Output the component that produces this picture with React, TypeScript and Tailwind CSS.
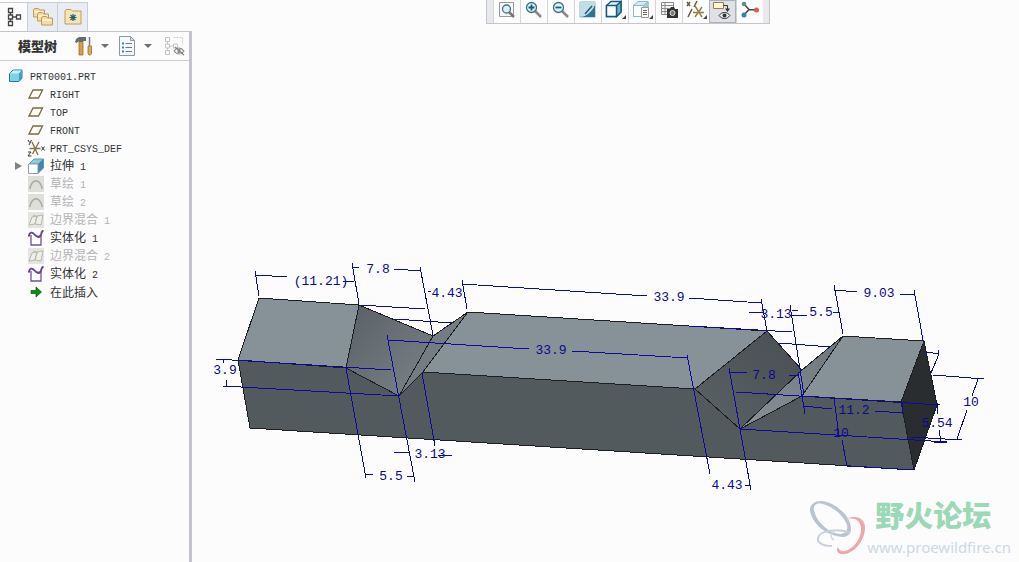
import React from "react";

type IconName =
  | "part"
  | "plane"
  | "csys"
  | "extrude"
  | "sketch"
  | "blend"
  | "solidify"
  | "insert";

interface TreeItem {
  label: string;
  icon: IconName;
  muted?: boolean;
  expandable?: boolean;
}

const treeItems: TreeItem[] = [
  { label: "RIGHT", icon: "plane" },
  { label: "TOP", icon: "plane" },
  { label: "FRONT", icon: "plane" },
  { label: "PRT_CSYS_DEF", icon: "csys" },
  { label: "拉伸 1", icon: "extrude", expandable: true },
  { label: "草绘 1", icon: "sketch", muted: true },
  { label: "草绘 2", icon: "sketch", muted: true },
  { label: "边界混合 1", icon: "blend", muted: true },
  { label: "实体化 1", icon: "solidify" },
  { label: "边界混合 2", icon: "blend", muted: true },
  { label: "实体化 2", icon: "solidify" },
  { label: "在此插入", icon: "insert" },
];

const TreeIcon = ({ name }: { name: IconName }) => {
  switch (name) {
    case "part":
      return (
        <svg className="w-4 h-4 shrink-0" viewBox="0 0 16 16">
          <path d="M1.5 5.5 5 2h9v8l-3 3.5H1.5z" fill="#7cd0ea" stroke="#2a7c9c" />
          <path d="M2 5.5 5.2 2.5h8.3L11 5.5z" fill="#c6effa" />
          <path d="M11 5.5 13.5 2.5V10L11 13z" fill="#3d9fc4" />
        </svg>
      );
    case "plane":
      return (
        <svg className="w-4 h-4 shrink-0" viewBox="0 0 16 16">
          <path d="M5 4h9.500L10.500 12H1z" fill="#fdfcf6" stroke="#7b6a48" strokeWidth="1.300" />
        </svg>
      );
    case "csys":
      return (
        <svg className="w-4 h-4 shrink-0 overflow-visible" viewBox="0 0 16 16">
          <path d="M1.500 8.500h11M4 2l6 13M11 2 4.500 14" stroke="#8a7444" strokeWidth="1.400" fill="none" />
          <path d="M13.500 6.500l3 4m0-4-3 4M0 0l1.500 2.500M3.500 0 1 5M0 12h3L0 16h3.500" stroke="#333" fill="none" />
        </svg>
      );
    case "extrude":
      return (
        <svg className="w-4 h-4 shrink-0" viewBox="0 0 16 16">
          <path d="M1 6 6 1h9.500v9L10 15.500V6z" fill="#8fc9e2" stroke="#5b9dba" />
          <path d="M10 6 15 1v9l-5 5z" fill="#3f86a8" />
          <path d="M.5 6h9.500v9.500H.5z" fill="#fff" stroke="#8aa0aa" />
        </svg>
      );
    case "sketch":
      return (
        <svg className="w-4 h-4 shrink-0" viewBox="0 0 16 16">
          <path d="M0 0h16v16H0z" fill="#dededb" />
          <path d="M2 11.500C5 2.500 11 2.500 14 11.500" stroke="#aaa99b" strokeWidth="1.500" fill="none" />
          <path d="M1 11h2v2H1zM13 11h2v2h-2z" fill="#b9b8ae" />
        </svg>
      );
    case "blend":
      return (
        <svg className="w-4 h-4 shrink-0" viewBox="0 0 16 16">
          <path d="M0 0h16v16H0z" fill="#e4e4e1" />
          <path d="M1 13 4 5l5-1-2 8zM7 12 9 4l6-1-2 10zM5 3l5 2" stroke="#b8b8ac" fill="#eeeeea" />
        </svg>
      );
    case "solidify":
      return (
        <svg className="w-4 h-4 shrink-0" viewBox="0 0 16 16">
          <path d="M3 5v10h10V5" fill="#fff" stroke="#71538f" strokeWidth="1.300" />
          <path d="M5 3c3 0 3 4 6 3.500 2-.5 2-3 3-4.500L13 5H9z" fill="#cdbfe0" />
          <path d="M.8 6.500C1.500 2 4 1.500 6.500 4.500S12 8 13 4.500c.5-2 1-3.500 2.500-4" fill="none" stroke="#67428f" strokeWidth="1.900" />
        </svg>
      );
    case "insert":
      return (
        <svg className="w-4 h-4 shrink-0" viewBox="0 0 16 16">
          <path d="M3 6.500h5V3l5.500 5L8 13V9.500H3z" fill="#128a12" stroke="#075c07" strokeWidth=".7" />
        </svg>
      );
  }
};

// latin is set smaller than the hanzi, so one letter is half as wide as one hanzi
const Label = ({ text, muted }: { text: string; muted?: boolean }) => (
  <span
    className={
      muted
        ? "pl-1.5 text-[12px] leading-4 whitespace-pre text-[#b4b4b4] font-['Noto_Sans_CJK_SC',sans-serif]"
        : "pl-1.5 text-[12px] leading-4 whitespace-pre text-[#333] font-['Noto_Sans_CJK_SC',sans-serif]"
    }
  >
    {text.split(/([\x20-\x7e]+)/).map((part, i) =>
      i % 2 ? (
        <span key={i} className="text-[10px] font-['Liberation_Mono',monospace]">
          {part}
        </span>
      ) : (
        part
      )
    )}
  </span>
);

const Row = ({ item }: { item: TreeItem }) => (
  <li className="flex items-center h-[18px] pl-3">
    <span className="w-4 shrink-0">
      {item.expandable && (
        <button aria-label={"展开 " + item.label} className="flex">
          <svg className="w-3 h-3" viewBox="0 0 12 12">
            <path d="M3 2v8l7-4z" fill="#7c8584" />
          </svg>
        </button>
      )}
    </span>
    <TreeIcon name={item.icon} />
    <Label text={item.label} muted={item.muted} />
  </li>
);

const Folder = ({ x, y }: { x: number; y: number }) => (
  <g transform={`translate(${x} ${y})`}>
    <path d="M.5 9V2l1-1.500h4L7 2h4.500v7z" fill="#f3dca4" stroke="#c39a55" />
    <path d="M1.500 4h9" stroke="#fff6dc" strokeWidth="1.500" />
  </g>
);

const Caret = () => (
  <svg className="w-2 h-2" viewBox="0 0 8 8">
    <path d="M0 2h8L4 6z" fill="#6f6f6f" />
  </svg>
);

const SidePanel = () => (
  <aside className="flex flex-col shrink-0 w-48 pt-[2px]">
    <div className="flex h-[29px] shrink-0">
      <button aria-label="模型树" className="w-7 flex items-center justify-center border-t border-r border-[#c9ced6]">
        <svg className="w-4 h-5" viewBox="0 0 16 20" fill="none" stroke="#444" strokeWidth="1.300">
          <path d="M2.500 1.500h4v4h-4zM2.500 8h4v4h-4zM2.500 14.500h4v4h-4zM10.500 8h4v4h-4zM4.500 5.500V8M4.500 12v2.500M6.500 10h4" />
        </svg>
      </button>
      <button aria-label="文件夹浏览器" className="w-[30px] flex items-center justify-center bg-[#e9edf3] border-t border-r border-[#c9ced6]">
        <svg className="w-5 h-5" viewBox="0 0 20 20">
          <Folder x={0} y={1} />
          <Folder x={4} y={5} />
          <Folder x={8} y={9} />
        </svg>
      </button>
      <button aria-label="收藏夹" className="w-[30px] flex items-center justify-center bg-[#e9edf3] border-t border-r border-[#c9ced6]">
        <svg className="w-[18px] h-[18px]" viewBox="0 0 18 18">
          <path d="M1 16V3l1-1.500h5L8.500 3H17v13z" fill="#f6e4b7" stroke="#c39a55" />
          <path d="M9 6v7M5.500 9.500h7M6.500 7l5 5M11.500 7l-5 5" stroke="#17627c" strokeWidth="1.200" />
        </svg>
      </button>
    </div>
    <div className="flex flex-col grow border-t border-r-[3px] border-t-[#c3c7cd] border-r-[#c3c4cb]">
      <div className="flex items-center h-[29px] shrink-0 border-b border-[#c9cdd3] pl-[18px] pr-1">
        <h1 className="w-[58px] text-[13px] font-black text-[#333] font-['Noto_Sans_CJK_SC',sans-serif] leading-4">模型树</h1>
        <button aria-label="设置" className="flex items-center gap-2">
          <svg className="w-[18px] h-5" viewBox="0 0 18 20">
            <path d="M4 5h4v14H4z" fill="#d99e4b" stroke="#9c6a2a" strokeWidth=".8" />
            <path d="M0 6c1-4 3-5 6-5h5v4H8v1H4V5L1.500 7z" fill="#656b70" />
            <path d="M14.500 1v9" stroke="#777d82" strokeWidth="1.500" />
            <path d="M13 10h3.500v7.500l-1 1.500H14l-1-1.500z" fill="#e2a850" stroke="#a06f2c" strokeWidth=".8" />
          </svg>
          <Caret />
        </button>
        <button aria-label="显示" className="flex items-center gap-2 ml-[9px]">
          <svg className="w-[18px] h-5" viewBox="0 0 18 20">
            <path d="M1.500.5h11l4 4v15h-15z" fill="#f4f8fa" stroke="#8c989e" />
            <path d="M12.500.5v4h4z" fill="#cfdbe0" stroke="#8c989e" />
            <path d="M4 7.500h2M4 11.500h2M4 15.500h2" stroke="#3f84a3" strokeWidth="2" />
            <path d="M7.500 7.500H14M7.500 11.500H14M7.500 15.500H14" stroke="#707a80" />
          </svg>
          <Caret />
        </button>
        <button aria-label="隐藏项" className="ml-3">
          <svg className="w-[21px] h-5 block" viewBox="0 0 21 20" fill="none">
            <path d="M1.500 1.500h4v4h-4zM1.500 8h4v4h-4zM1.500 14.500h4v4h-4zM9.500 8h4v4h-4zM3.500 5.500V8M3.500 12v2.500M5.500 10h4" stroke="#c5c5c5" />
            <path d="M9.500 1.500h9v7" stroke="#ccc" strokeDasharray="2 1" />
            <path d="M10 15c3-4 7-4 10 0-3 4-7 4-10 0zM11 11l9 8" stroke="#858585" strokeWidth="1.200" />
            <path d="M13.500 13h3v4h-3z" fill="#8c8c8c" />
          </svg>
        </button>
      </div>
      <ul className="pt-1.5">
        <li className="flex items-center h-[18px] pl-2">
          <TreeIcon name="part" />
          <Label text="PRT0001.PRT" />
        </li>
        {treeItems.map((item) => (
          <Row key={item.label} item={item} />
        ))}
      </ul>
    </div>
  </aside>
);

const Corner = () => <path d="M22 15v4h-4z" fill="#444" />;

const Cube = ({ light = false }: { light?: boolean }) => (
  <g stroke={light ? "#8fb8ca" : "#155a7b"} strokeWidth={light ? 1 : 1.4}>
    <path d="M2.500 5.500 7 1.500h10V12l-4.500 4.500h-10z" fill={light ? "#d5e9f1" : "#e9f6fb"} />
    <path d="M12.500 5.500 17 1.500V12l-4.500 4.500z" fill={light ? "#a8cfdf" : "#6fb3cf"} />
    <path d="M2.500 5.500h10v11h-10z" fill="#fbfdfe" />
  </g>
);

const tools: { label: string; drawing: React.ReactNode; active?: boolean }[] = [
  {
    label: "重新调整",
    drawing: (
      <>
        <path d="M3.500 2.500h14v14h-14z" fill="#f6f6f6" stroke="#9a9a9a" />
        <path d="m13 12 5 5" stroke="#777" strokeWidth="2.500" />
        <circle cx="10.500" cy="9" r="4" fill="#d8eef7" stroke="#4c6f82" strokeWidth="1.300" />
      </>
    ),
  },
  {
    label: "放大",
    drawing: (
      <>
        <path d="m12 11 6 6" stroke="#888" strokeWidth="2.500" />
        <circle cx="8.500" cy="7.500" r="5" fill="#e2f3fa" stroke="#36708d" strokeWidth="1.300" />
        <path d="M5.500 7.500h6M8.500 4.500v6" stroke="#165b80" strokeWidth="1.800" />
      </>
    ),
  },
  {
    label: "缩小",
    drawing: (
      <>
        <path d="m12 11 6 6" stroke="#888" strokeWidth="2.500" />
        <circle cx="8.500" cy="7.500" r="5" fill="#e2f3fa" stroke="#36708d" strokeWidth="1.300" />
        <path d="M5.500 7.500h6" stroke="#165b80" strokeWidth="1.800" />
      </>
    ),
  },
  {
    label: "重画",
    drawing: (
      <>
        <path d="M3 2h15v15H3z" fill="#d4e7ed" stroke="#8eb0bd" />
        <path d="M18 5v12H5c6-2 10-6 13-12z" fill="#2f7590" />
        <path d="M3 2h15v3c-1 1-1 1-2 3L7 16H3z" fill="#c3dde6" />
        <path d="m8 14 7-8" stroke="#1d5d77" strokeWidth="1.500" />
      </>
    ),
  },
  {
    label: "显示样式",
    drawing: (
      <>
        <Cube />
        <Corner />
      </>
    ),
  },
  {
    label: "已保存方向",
    drawing: (
      <>
        <Cube light />
        <path d="M10.500 7.500h7v10h-7z" fill="#fff" stroke="#999" />
        <path d="M12 10.500h4M12 12.500h4M12 14.500h4" stroke="#666" />
        <Corner />
      </>
    ),
  },
  {
    label: "视图管理器",
    drawing: (
      <>
        <path d="M3.500 2.500h12v12h-12zM3.500 5.500h12M3.500 8.500h12M3.500 11.500h12M7 2.500v12" fill="#f7f7f7" stroke="#8c8c8c" />
        <path d="M9 9h3l1-2h3l1 2h3v9H9z" fill="#333" />
        <circle cx="14.500" cy="13" r="2.500" fill="#777" stroke="#ddd" />
      </>
    ),
  },
  {
    label: "基准显示",
    drawing: (
      <>
        <path d="m2 2 3 4M5 2 2 6M12 1 9 7M7 9l-4 8" stroke="#6b5a31" strokeWidth="1.500" />
        <path d="m10 6 7 11M17 7l-7 10M8 12.500h11" stroke="#96803f" strokeWidth="1.400" />
        <Corner />
      </>
    ),
  },
  {
    label: "注释显示",
    active: true,
    drawing: (
      <>
        <path d="M2.500 1.500h10v6h-10z" fill="#fff8dc" stroke="#967f45" />
        <path d="M12.500 4.500h4v4" fill="none" stroke="#333" />
        <path d="M14 7.500h5L16.500 11z" fill="#333" />
        <path d="M8 14.500c3-4 8-4 11 0-3 4-8 4-11 0z" fill="#eee" stroke="#333" />
        <circle cx="13.500" cy="14.500" r="2" fill="#333" />
      </>
    ),
  },
  {
    label: "旋转中心",
    drawing: (
      <>
        <path d="M5 4 10 9.500 17 10M10 9.500 5 15" stroke="#444" strokeWidth="1.500" fill="none" />
        <circle cx="5" cy="4" r="2.300" fill="#4f9c68" />
        <circle cx="17.500" cy="10" r="2.500" fill="#cd5d59" />
        <circle cx="5" cy="15" r="2.500" fill="#397eac" />
      </>
    ),
  },
];

const Toolbar = () => (
  <div className="flex justify-center pl-11 shrink-0">
    <div className="flex h-6 border-x border-b border-[#c3c5ca] bg-[#e8e9ec] px-1.5">
      {tools.map((tool) => (
        <button
          key={tool.label}
          aria-label={tool.label}
          className={
            tool.active
              ? "w-[27px] flex justify-center bg-[#e0e1e7] border border-[#aeb0b8]"
              : "w-[27px] flex justify-center bg-[#fcfcfd] border-l border-[#d3d5d9]"
          }
        >
          <svg className="w-[22px] h-5 shrink-0" viewBox="0 0 22 20" fill="none">
            {tool.drawing}
          </svg>
        </button>
      ))}
    </div>
  </div>
);

// dimension, extension and hidden lines
const dimLines = [
  // left block, upper dimensions
  "M255 271 259 296M256 275 287 277M343 281H354M352 263 359 304M352 267H359M394 269 421 271M420 267 433 335M428 291H431",
  "M359 305 425 309M394 319 452 323M462 280 467 309M462 284 647 296M689 298 762 303",
  // left block, lower dimensions
  "M216 359 391 370M223 386 399 396M223 359V363M226 380V386",
  "M346 368 366 478M366 474H373M407 476H414M387 335 415 482M388 340 529 349M394 452H409M422 373 435 446M438 455H452",
  // middle and right notch
  "M572 351 688 358M687 355 710 474M740 429 751 490M745 485H751M690 326 792 332",
  "M761 299 767 331M749 312H764M790 305 804 395M792 310H798M790 315H807M779 343 831 347M834 285 843 334M835 290 857 292M833 312H839M900 294 915 295M914 290 923 340",
  "M729 368 740 429M730 372H747M789 375H799M798 372 805 414M736 392 940 405M803 406 832 409M875 411 903 413M902 403V414",
  "M834 398 839 436M842 440 847 466M740 429 947 442M847 466 914 470",
  // right end
  "M926 352 939 354 931 373M938 350V354M933 375 984 379M978 379 972 396M967 410 957 439M911 437 962 440M939 430 941 442M934 442H947M937 403V414",
];

const dimLabels: { x: number; y: number; text: string }[] = [
  { x: 321, y: 285, text: "(11.21)" },
  { x: 378, y: 273, text: "7.8" },
  { x: 447, y: 297, text: "4.43" },
  { x: 669, y: 301, text: "33.9" },
  { x: 551, y: 354, text: "33.9" },
  { x: 879, y: 297, text: "9.03" },
  { x: 776, y: 318, text: "3.13" },
  { x: 821, y: 316, text: "5.5" },
  { x: 764, y: 379, text: "7.8" },
  { x: 854, y: 414, text: "11.2" },
  { x: 841, y: 437, text: "10" },
  { x: 937, y: 427, text: "5.54" },
  { x: 971, y: 406, text: "10" },
  { x: 727, y: 489, text: "4.43" },
  { x: 391, y: 480, text: "5.5" },
  { x: 430, y: 458, text: "3.13" },
  { x: 225, y: 374, text: "3.9" },
];

const Model = () => (
  <svg className="w-full grow min-h-0" viewBox="192 24 827 538" role="img" aria-label="PRT0001">
    <defs>
      <linearGradient id="notchLeft" x1="0" y1="0" x2="1" y2="1">
        <stop offset="0" stopColor="#596065" />
        <stop offset="1" stopColor="#7b848a" />
      </linearGradient>
      <linearGradient id="notchRight" x1="0" y1="1" x2="1" y2="0">
        <stop offset="0" stopColor="#5b6366" />
        <stop offset="1" stopColor="#484e51" />
      </linearGradient>
      <linearGradient id="sliver" x1="0" y1="1" x2="1" y2="0">
        <stop offset="0" stopColor="#899298" />
        <stop offset="1" stopColor="#6c757a" />
      </linearGradient>
    </defs>
    <g stroke="#1b1f21" strokeWidth="1" strokeLinejoin="round" shapeRendering="crispEdges">
      <path d="M238 360 346 368 399 396 423 372 695 389 740 429 802 396 901 402 914 470 250 428z" fill="#535a5d" />
      <path d="M259 298 359 305 346 368 238 360z" fill="#869198" />
      <path d="M468 312 767 331 695 389 423 372z" fill="#869198" />
      <path d="M843 336 924 341 901 402 802 396z" fill="#869198" />
      <path d="M359 305 433 336 399 396 346 368z" fill="url(#notchLeft)" />
      <path d="M433 336 468 312 423 372 399 396z" fill="#747d82" />
      <path d="M767 331 802 370 740 429 695 389z" fill="url(#notchRight)" />
      <path d="M802 370 843 336 802 396 740 429z" fill="url(#sliver)" />
      <path d="M924 341 937 405 914 470 901 402z" fill="#292d30" />
    </g>
    <g stroke="#0a0aa0" strokeWidth="1" fill="none" shapeRendering="crispEdges">
      {dimLines.map((d) => (
        <path key={d} d={d} />
      ))}
    </g>
    <g fill="#0a0a8c" textAnchor="middle" className="text-[13px] font-['Liberation_Mono',monospace]">
      {dimLabels.map((label) => (
        <text key={label.x} x={label.x} y={label.y}>
          {label.text}
        </text>
      ))}
    </g>
  </svg>
);

const Watermark = () => (
  <div className="absolute right-2 bottom-1 flex items-end">
    <svg className="w-[58px] h-[58px]" viewBox="0 0 58 58" fill="none">
      <path
        fillRule="evenodd"
        d="M1 10C1 1 12-2 23 4c11 6 19 15 19 25 0 5-3 7-7 8C18 37 2 23 1 10zm4 0c2 11 14 23 26 24 6 0 8-4 7-9C35 16 25 8 17 5 10 2 4 3 5 10z"
        fill="#b9c4d0"
      />
      <path d="M38 19c9-5 19 0 18 10-1 14-14 27-24 25-4-1-5-4-3-7 1 3 3 5 7 4 8-2 15-11 16-20 1-9-5-14-14-12z" fill="#efa6aa" />
      <path d="M41 33c-10-5-31-3-32 5-1 5 5 8 14 8" stroke="#c9d0d8" strokeWidth="2" />
      <path d="M27 30c-5 2-7 7-2 10" stroke="#d3d9df" strokeWidth="1.500" />
    </svg>
    <div className="flex flex-col">
      <p className="pl-2 text-[29px] leading-[44px] font-black text-[#9bd8b5] font-['Noto_Sans_CJK_SC',sans-serif]">野火论坛</p>
      <a href="#" className="text-[15px] leading-[22px] text-[#ccd9e3] font-['Noto_Sans',sans-serif]">
        www.proewildfire.cn
      </a>
    </div>
  </div>
);

export default function App() {
  return (
    <div className="flex h-screen bg-[#fcfcfd] overflow-hidden">
      <SidePanel />
      <main className="relative flex flex-col grow min-w-0">
        <Toolbar />
        <Model />
        <Watermark />
      </main>
    </div>
  );
}
